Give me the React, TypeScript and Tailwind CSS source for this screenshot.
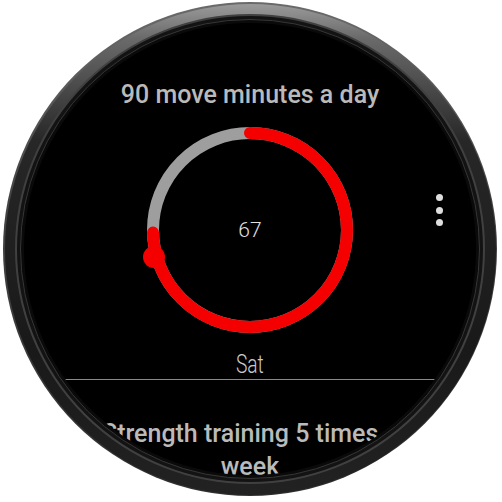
import React from "react";

const R = 97;
const C = 2 * Math.PI * R;
const redLen = (67 / 90) * C;

function Ring() {
  return (
    <svg width="206" height="206" viewBox="0 0 206 206" className="block overflow-visible">
      <circle cx="103" cy="103" r={R} fill="none" stroke="#9e9e9e" strokeWidth="12" />
      <circle
        cx="103"
        cy="103"
        r={R}
        fill="none"
        stroke="#f40000"
        strokeWidth="12"
        strokeLinecap="round"
        strokeDasharray={`${redLen} ${C}`}
        transform="rotate(-90 103 103)"
      />
      <circle cx="7" cy="130" r="11" fill="#f40000" />
    </svg>
  );
}

export default function App() {
  return (
    <div className="w-[502px] h-[502px] bg-white overflow-hidden">
      <div className="ml-[3px] mt-[2px] w-[494px] h-[494px] rounded-full bg-[linear-gradient(180deg,#6a6a6a_0%,#444444_40%,#303030_100%)] p-[1.5px]">
        <div className="w-full h-full rounded-full p-[10.5px] bg-[linear-gradient(180deg,#9a9a9a_0%,#6a6a6a_7%,#272727_28%,#191919_70%,#222222_100%)]">
          <div className="w-full h-full rounded-full border-2 border-[#404040] bg-[#131313] p-[3px]">
            <div className="w-full h-full rounded-full border border-[#363636] bg-[#0a0a0a] p-[3px]">
              <div className="relative w-full h-full rounded-full bg-black overflow-hidden flex flex-col items-center font-['Roboto',sans-serif]">
                <div className="shrink-0 pt-[59px] text-[25px] leading-none font-medium text-[#bababa] whitespace-nowrap">
                  90 move minutes a day
                </div>
                <div className="shrink-0 relative mt-[20px]">
                  <Ring />
                  <div className="absolute inset-0 flex items-center justify-center text-[21px] font-light text-[#e2e2e2] leading-none">
                    67
                  </div>
                </div>
                <div className="shrink-0 mt-[18px] text-[26px] leading-none font-light text-[#c8c8c8] scale-x-[0.74]">
                  Sat
                </div>
                <div className="shrink-0 mt-[2px] w-[370px] h-px bg-[#8a8a8a]" />
                <div className="shrink-0 mt-[37px] w-[300px] text-center text-[25px] leading-[33px] font-medium text-[#bababa]">
                  Strength training 5 times a week
                </div>
                <div className="absolute left-[411.5px] top-[171px] flex flex-col gap-[5.5px]">
                  <div className="w-[7px] h-[7px] rounded-full bg-[#dedede]" />
                  <div className="w-[7px] h-[7px] rounded-full bg-[#dedede]" />
                  <div className="w-[7px] h-[7px] rounded-full bg-[#dedede]" />
                </div>
              </div>
            </div>
          </div>
        </div>
      </div>
    </div>
  );
}
